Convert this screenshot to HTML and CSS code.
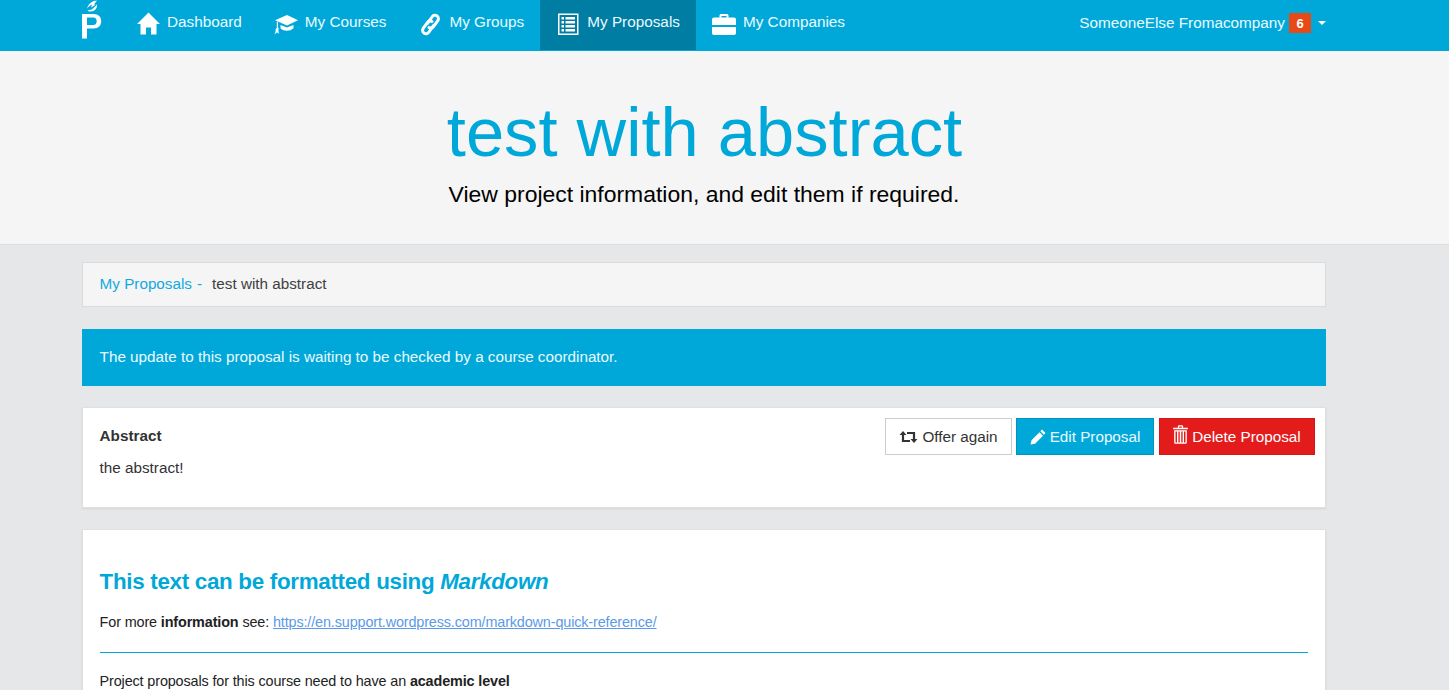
FILE: index.html
```html
<!DOCTYPE html>
<html lang="en">
<head>
<meta charset="utf-8">
<title>test with abstract</title>
<link rel="stylesheet" href="styles.css">
</head>
<body>
<header class="topbar">
  <nav class="topbar-inner">
    <a class="logo" href="#" aria-label="Home">
      <svg width="22" height="39" viewBox="0 0 22 39"><path d="M15 .5C10.500.5 6.500 3.500 5 8.500c1.500-2 3-3 5-4L9 7.500l4.500-2.800-1.500-.2L15 .5z" fill="#fff"/><path d="M15 4.500c.5 3.500-2 7-7 7-1.200 0-2-.5-2.500-1.300 2.500.3 4-.7 5.500-1.700z" fill="#fff"/><path fill-rule="evenodd" d="M0 14h11.500c5 0 7.700 3 7.700 7.300s-2.800 7.200-7.700 7.200H5v10H0zM5 17.500v7.500h6.300c2.200 0 3.400-1.500 3.400-3.700s-1.200-3.800-3.400-3.800z" fill="#fff"/></svg>
    </a>
    <a class="nav-item" href="#"><span class="nav-icon"><svg width="24" height="24" viewBox="0 0 24 24"><path d="M12.500 0.500L1 12h3.500v10.500h5.500v-7h5v7h5.500V12H24z" fill="#fff"/></svg></span>Dashboard</a>
    <a class="nav-item" href="#"><span class="nav-icon"><svg width="24" height="24" viewBox="0 0 24 24"><path d="M13 3L1 8.300 13 13.500 24 8.300z" fill="#fff"/><path d="M6.500 13v3.300c2 1.800 4 2.500 6.500 2.500s4.500-.8 6.500-2.500V13L13 15.600z" fill="#fff"/><path d="M2.800 9.500v6.500l-1.300 1.300.3 1.200-1.300 4 2.600-2.200 1.800 1.800-.6-4.600.6-1-1-1V10z" fill="#fff"/></svg></span>My Courses</a>
    <a class="nav-item" href="#"><span class="nav-icon"><svg width="24" height="24" viewBox="0 0 24 24"><g fill="none" stroke="#fff" stroke-width="3" stroke-linecap="round" stroke-linejoin="round"><path id="link-half" d="M9.500 11.500L14 5c1.200-1.900 3.500-2.300 5-1.100 1.600 1.200 1.900 3.400.7 5l-4.200 5.600c-1.200 1.600-3 1.900-4.500 1"/><path d="M15.500 13.500L11 20c-1.200 1.900-3.500 2.300-5 1.100-1.600-1.200-1.900-3.400-.7-5l4.200-5.600c1.200-1.600 3-1.900 4.500-1"/></g></svg></span>My Groups</a>
    <a class="nav-item nav-item-active" href="#"><span class="nav-icon"><svg width="24" height="24" viewBox="0 0 24 24"><path fill-rule="evenodd" d="M2 1.500h20.500v21.500H2zM3.500 3v18.500H21V3z" fill="#fff"/><path d="M5.500 5h2.500v2.500H5.500zM9.500 5H19v2.500H9.500zM5.500 9h2.500v2.500H5.500zM9.500 9H19v2.500H9.500zM5.500 13h2.500v2.500H5.500zM9.500 13H19v2.500H9.500zM5.500 17h2.500v2.500H5.500zM9.500 17H19v2.500H9.500z" fill="#fff"/></svg></span>My Proposals</a>
    <a class="nav-item" href="#"><span class="nav-icon"><svg width="24" height="24" viewBox="0 0 24 24"><path fill-rule="evenodd" d="M7.500 5.500V3.500c0-.8.700-1.500 1.500-1.500h6c.8 0 1.500.7 1.500 1.500v2h5.500c1 0 2 .8 2 2V13H0V7.500c0-1.200 1-2 2-2zM9.500 4v1.500h5V4z" fill="#fff"/><path d="M0 15h24v6c0 1-.8 2-2 2H2c-1.200 0-2-1-2-2z" fill="#fff"/></svg></span>My Companies</a>
    <a class="user-menu" href="#">SomeoneElse Fromacompany<span class="badge">6</span><span class="caret"></span></a>
  </nav>
</header>

<section class="hero">
  <div class="hero-inner">
    <h1 class="hero-title">test with abstract</h1>
    <p class="hero-sub">View project information, and edit them if required.</p>
  </div>
</section>

<main class="content">
  <div class="breadcrumbs"><a href="#">My Proposals</a><span class="crumb-sep">-</span><span class="crumb-current">test with abstract</span></div>
  <div class="alert">The update to this proposal is waiting to be checked by a course coordinator.</div>
  <section class="panel abstract-panel">
    <div class="abstract-text">
      <h5 class="abstract-title">Abstract</h5>
      <p class="abstract-body">the abstract!</p>
    </div>
    <div class="actions">
      <a class="btn btn-plain" href="#"><svg class="btn-icon" width="19" height="14" viewBox="0 0 19 14"><g fill="none" stroke="#333" stroke-width="2.200"><path d="M4 3v8h7"/><path d="M15 11V3H8"/></g><path d="M0.500 5L4 1l3.500 4zM11.500 9l3.500 4 3.500-4z" fill="#333"/></svg>Offer again</a>
      <a class="btn btn-blue" href="#"><svg class="btn-icon" width="16" height="16" viewBox="0 0 16 16"><path d="M12 .5l3.500 3.500-1.600 1.700-3.500-3.500zM9.500 3.200l3.500 3.500-8 8L0.500 15.500 1.500 11.200z" fill="#fff"/></svg>Edit Proposal</a>
      <a class="btn btn-red" href="#"><svg class="btn-icon btn-icon-trash" width="15" height="19" viewBox="0 0 14 18"><path fill-rule="evenodd" d="M4.500 1.500C4.500.7 5 .3 5.800.3h2.400c.8 0 1.300.4 1.300 1.200V2.500H14v1.500H0V2.500h4.500zM5.700 1.400v1.100h2.600V1.400zM1 5h12v11.500c0 .8-.6 1.300-1.300 1.300H2.300c-.7 0-1.300-.5-1.300-1.300zM2.300 6.200v10.300h1.400V6.200zM5 6.200v10.300h1.300V6.200zM7.700 6.200v10.300H9V6.200zM10.300 6.200v10.300h1.400V6.200z" fill="#fff"/></svg>Delete Proposal</a>
    </div>
  </section>
  <section class="panel markdown-panel">
    <h2 class="md-title">This text can be formatted using <em>Markdown</em></h2>
    <p class="md-text">For more <strong>information</strong> see: <a href="#">https://en.support.wordpress.com/markdown-quick-reference/</a></p>
    <hr class="md-rule">
    <p class="md-text">Project proposals for this course need to have an <strong>academic level</strong></p>
  </section>
</main>
</body>
</html>
```

FILE: styles.css
```css
* {
  box-sizing: border-box;
}

html,
body {
  margin: 0;
  height: 690px;
  overflow: hidden;
}

body {
  background: #e6e7e9;
  color: #333;
  font-family: "Liberation Sans", Arial, sans-serif;
  font-size: 15.25px;
}

a {
  text-decoration: none;
}

.topbar {
  background: #00a8d9;
  height: 51px;
  font-size: 15.3px;
}

.topbar-inner {
  display: flex;
  align-items: flex-start;
  margin-left: 82px;
  width: 1244px;
  height: 50px;
}

.logo {
  display: block;
  width: 38px;
  height: 50px;
}

.logo svg {
  display: block;
}

.nav-item {
  display: flex;
  align-items: center;
  gap: 7px;
  height: 50px;
  padding: 0 16px 7px;
  color: #eafaff;
  white-space: nowrap;
}

.nav-item-active {
  background: #007da3;
}

.nav-icon {
  display: block;
  width: 24px;
  height: 24px;
  margin-top: 4px;
}

.nav-icon svg {
  display: block;
}

.user-menu {
  display: flex;
  align-items: center;
  margin-left: auto;
  height: 45px;
  color: #eafaff;
  white-space: nowrap;
}

.badge {
  display: block;
  width: 22px;
  height: 20px;
  margin-left: 4px;
  background: #e84a17;
  color: #fff;
  font-size: 13px;
  font-weight: 700;
  line-height: 21px;
  text-align: center;
}

.caret {
  display: block;
  margin-left: 7px;
  border-style: solid;
  border-width: 4px 4px 0;
  border-color: #fff transparent transparent;
}

.hero {
  background: #f5f5f5;
  border-bottom: 1px solid #dcdcdc;
  height: 194px;
}

.hero-inner {
  margin-left: 82px;
  width: 1244px;
  padding-top: 40px;
  text-align: center;
}

.hero-title {
  margin: 0;
  padding-left: 1px;
  color: #00a8d9;
  font-size: 68.7px;
  font-weight: 400;
  line-height: 84px;
}

.hero-sub {
  margin: 0;
  color: #000;
  font-size: 22.95px;
  line-height: 38px;
}

.content {
  margin-left: 82px;
  width: 1244px;
  padding-top: 17px;
}

.breadcrumbs {
  display: flex;
  align-items: center;
  height: 45px;
  padding: 0 16.6px 2px;
  background: #f5f5f5;
  border: 1px solid #dcdcdc;
}

.breadcrumbs a {
  color: #14a9de;
}

.crumb-sep {
  margin: 0 10px 0 5px;
  color: #14a9de;
}

.crumb-current {
  color: #404040;
}

.alert {
  height: 57px;
  margin-top: 22px;
  padding: 0 17.6px;
  background: #00a8d9;
  color: #eafaff;
  line-height: 56px;
}

.panel {
  background: #fff;
  border: 1px solid #e0e0e0;
  box-shadow: 0 1px 2px rgba(0, 0, 0, 0.08);
}

.abstract-panel {
  display: flex;
  justify-content: space-between;
  height: 101px;
  margin-top: 21px;
  padding: 10px 10px 0 16.6px;
}

.abstract-title {
  margin: 9px 0 0;
  font-size: 15.25px;
  font-weight: 700;
  line-height: 17px;
}

.abstract-body {
  margin: 15px 0 0;
  line-height: 17px;
}

.actions {
  display: flex;
  gap: 4px;
}

.btn {
  display: flex;
  align-items: center;
  justify-content: center;
  gap: 4px;
  height: 37px;
  white-space: nowrap;
}

.btn-icon {
  display: block;
  flex: none;
}

.btn-icon-trash {
  margin-top: -4px;
}

.btn-plain {
  width: 127px;
  background: #fff;
  border: 1px solid #ccc;
  color: #333;
}

.btn-blue {
  width: 138px;
  background: #00a8d9;
  border: 1px solid #0094bf;
  color: #eafaff;
}

.btn-red {
  width: 156px;
  margin-left: 1px;
  background: #e41b1b;
  border: 1px solid #d01818;
  color: #fff;
}

.markdown-panel {
  height: 400px;
  margin-top: 21px;
  padding: 0 16.6px;
}

.md-title {
  margin: 38px 0 0;
  color: #00a8d9;
  font-size: 22.4px;
  font-weight: 700;
  letter-spacing: -0.31px;
  line-height: 28px;
}

.md-text {
  margin: 0;
  color: #222;
  font-size: 14.4px;
  letter-spacing: -0.13px;
  line-height: 20px;
}

.md-title + .md-text {
  margin-top: 16px;
}

.md-text a {
  color: #5b9ae8;
  text-decoration: underline;
}

.md-rule {
  height: 1px;
  margin: 20px 0 18px;
  background: #00a8d9;
  border: 0;
}
```
